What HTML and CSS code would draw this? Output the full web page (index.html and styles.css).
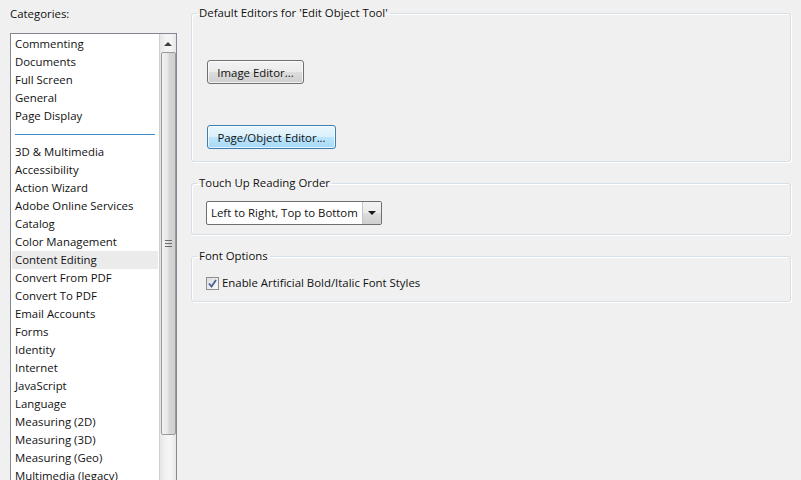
FILE: index.html
```html
<!DOCTYPE html>
<html lang="en">
<head>
  <meta charset="UTF-8">
  <title>Preferences - Content Editing</title>
  <link rel="stylesheet" href="styles.css">
</head>
<body>

<div class="layout">
  <aside class="sidebar">
    <div class="sidebar-title">Categories:</div>
    <div class="listbox">
      <ul class="items">
        <li>Commenting</li>
        <li>Documents</li>
        <li>Full Screen</li>
        <li>General</li>
        <li>Page Display</li>
        <li class="sep"><span></span></li>
        <li>3D &amp; Multimedia</li>
        <li>Accessibility</li>
        <li>Action Wizard</li>
        <li>Adobe Online Services</li>
        <li>Catalog</li>
        <li>Color Management</li>
        <li class="selected">Content Editing</li>
        <li>Convert From PDF</li>
        <li>Convert To PDF</li>
        <li>Email Accounts</li>
        <li>Forms</li>
        <li>Identity</li>
        <li>Internet</li>
        <li>JavaScript</li>
        <li>Language</li>
        <li>Measuring (2D)</li>
        <li>Measuring (3D)</li>
        <li>Measuring (Geo)</li>
        <li>Multimedia (legacy)</li>
      </ul>
      <div class="scrollbar">
        <div class="arrow-up"><span></span></div>
        <div class="thumb"><span class="grip"></span></div>
      </div>
    </div>
  </aside>

  <main class="panel">
    <fieldset class="group editors">
      <legend>Default Editors for 'Edit Object Tool'</legend>
      <button class="btn image-btn">Image Editor...</button>
      <button class="btn btn-default page-btn">Page/Object Editor...</button>
    </fieldset>

    <fieldset class="group reading">
      <legend>Touch Up Reading Order</legend>
      <div class="dropdown">
        <span class="dropdown-text">Left to Right, Top to Bottom</span>
        <span class="dropdown-arrow"><span></span></span>
      </div>
    </fieldset>

    <fieldset class="group fonts">
      <legend>Font Options</legend>
      <label class="check">
        <span class="checkbox">
          <svg width="9" height="9" viewBox="0 0 9 9"><path d="M1 4.5 L3.5 7.5 L8 1" fill="none" stroke="#4a5f97" stroke-width="1.8"/></svg>
        </span>
        Enable Artificial Bold/Italic Font Styles
      </label>
    </fieldset>
  </main>
</div>

</body>
</html>
```

FILE: styles.css
```css
body {
  margin: 0;
  background: #f0f0f0;
  font-family: "Open Sans", "Liberation Sans", sans-serif;
  font-size: 11.4px;
  color: #111;
  overflow: hidden;
}
.layout {
  display: flex;
  gap: 14px;
  padding: 5px 10px 0 10px;
}
.sidebar {
  width: 167px;
  flex-shrink: 0;
}
.sidebar-title {
  line-height: 17px;
  margin-bottom: 11px;
}
.listbox {
  display: flex;
  height: 460px;
  background: white;
  border: 1px solid #828790;
}
.items {
  list-style: none;
  margin: 0;
  padding: 1px 1px 0 1px;
  flex: 1;
  overflow: hidden;
}
.items li {
  height: 18px;
  line-height: 18px;
  padding-left: 3px;
  white-space: nowrap;
}
.items li.selected {
  background: #ebebeb;
}
.items li.sep {
  display: flex;
  align-items: center;
  padding: 0 3px;
}
.items li.sep span {
  display: block;
  width: 141px;
  height: 1px;
  margin-top: 1px;
  background: #3c8ac8;
}
.scrollbar {
  width: 16px;
  border-left: 1px solid #cfcfcf;
  background: linear-gradient(to right, #e6e6e6, #f4f4f4 40%, #f4f4f4 70%, #e6e6e6);
  display: flex;
  flex-direction: column;
  align-items: center;
}
.arrow-up {
  height: 18px;
  width: 16px;
  display: flex;
  justify-content: center;
  align-items: center;
}
.arrow-up span {
  width: 0;
  height: 0;
  border-left: 4px solid transparent;
  border-right: 4px solid transparent;
  border-bottom: 4px solid #3d3d3d;
  margin-top: 1px;
}
.thumb {
  width: 13px;
  height: 381px;
  border: 1px solid #9a9a9a;
  border-radius: 2px;
  background: linear-gradient(to right, #f3f3f3, #e6e6e6 45%, #d6d6d6 55%, #cfcfcf);
  display: flex;
  justify-content: center;
  align-items: center;
}
.grip {
  width: 7px;
  height: 5px;
  border-top: 1px solid #6a6a6a;
  border-bottom: 1px solid #6a6a6a;
  position: relative;
}
.grip::after {
  content: "";
  position: absolute;
  left: 0;
  right: 0;
  top: 2px;
  height: 1px;
  background: #6a6a6a;
}
.panel {
  flex: 1;
  display: flex;
  flex-direction: column;
  gap: 13px;
}
.group {
  margin: 0;
  border: 1px solid #d5dfe5;
  border-radius: 3px;
  box-shadow: inset 1px 1px 0 #fff, 1px 1px 0 #fff;
  padding: 0 15px;
  min-width: 0;
}
.group legend {
  padding: 0 2px;
  margin-left: -10px;
  line-height: 16px;
}
.editors {
  padding-top: 39px;
  padding-bottom: 12px;
  display: flex;
  flex-direction: column;
  align-items: flex-start;
}
.btn {
  font-family: inherit;
  font-size: 11.4px;
  color: #111;
  height: 24px;
  padding: 0;
  white-space: nowrap;
  border: 1px solid #707070;
  border-radius: 3px;
  background: linear-gradient(to bottom, #f2f2f2, #ebebeb 50%, #dddddd 50%, #cfcfcf);
  box-shadow: inset 0 0 0 1px rgba(255, 255, 255, 0.7);
}
.image-btn {
  width: 97px;
}
.page-btn {
  width: 129px;
  margin-top: 41px;
}
.btn-default {
  border-color: #3c7fb1;
  background: linear-gradient(to bottom, #eaf6fd, #d9f0fc 50%, #bee6fd 50%, #a7d9f5);
}
.reading {
  padding-top: 10px;
  padding-bottom: 9px;
}
.dropdown {
  width: 174px;
  height: 22px;
  margin-left: -1px;
  border: 1px solid #6f6f6f;
  border-radius: 2px;
  display: flex;
  background: white;
}
.dropdown-text {
  flex: 1;
  padding-left: 3px;
  white-space: nowrap;
  overflow: hidden;
  margin: 1px 0 1px 1px;
  line-height: 20px;
  background: white;
}
.dropdown-arrow {
  width: 18px;
  background: linear-gradient(to bottom, #f2f2f2, #ebebeb 50%, #dddddd 50%, #cfcfcf);
  border-left: 1px solid #c5c5c5;
  display: flex;
  justify-content: center;
  align-items: center;
}
.dropdown-arrow span {
  width: 0;
  height: 0;
  border-left: 4px solid transparent;
  border-right: 4px solid transparent;
  border-top: 4px solid #1a1a1a;
}
.fonts {
  padding-top: 12px;
  padding-bottom: 11px;
}
.check {
  display: flex;
  align-items: center;
  gap: 3px;
  margin-left: -1px;
  line-height: 14px;
}
.checkbox {
  width: 11px;
  height: 11px;
  border: 1px solid #8e8f8f;
  background: linear-gradient(135deg, #dcdcdc, #fbfbfb);
  display: flex;
  justify-content: center;
  align-items: center;
}
```
